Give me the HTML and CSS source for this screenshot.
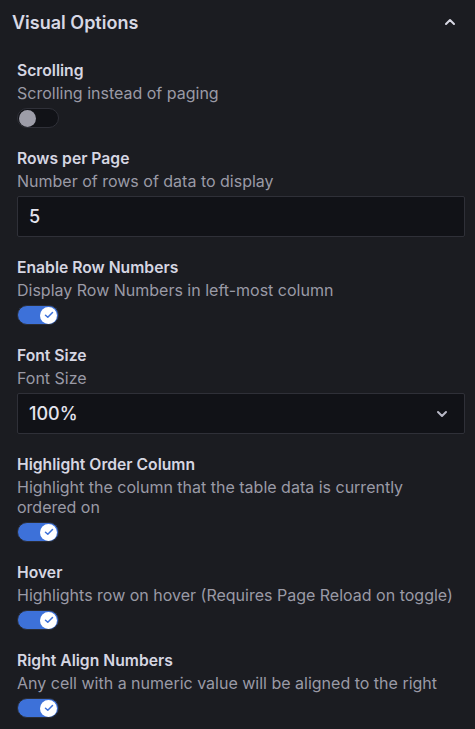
FILE: index.html
```html
<!DOCTYPE html>
<html lang="en">
<head>
<meta charset="utf-8">
<title>Visual Options</title>
<link rel="stylesheet" href="styles.css">
</head>
<body>
<section class="panel">
  <header class="panel-header">
    <h2 class="panel-title">Visual Options</h2>
    <svg class="chev" width="12" height="8" viewBox="0 0 12 8"><path d="M2 6 L6 2 L10 6" fill="none" stroke="#d8d8e4" stroke-width="2" stroke-linecap="round" stroke-linejoin="round"/></svg>
  </header>
  <div class="fields">
    <div class="field">
      <div class="label">Scrolling</div>
      <div class="desc">Scrolling instead of paging</div>
      <div class="switch off"><span class="knob"></span></div>
    </div>
    <div class="field">
      <div class="label">Rows per Page</div>
      <div class="desc">Number of rows of data to display</div>
      <div class="input">5</div>
    </div>
    <div class="field">
      <div class="label">Enable Row Numbers</div>
      <div class="desc">Display Row Numbers in left-most column</div>
      <div class="switch on"><span class="knob"><svg width="10" height="8" viewBox="0 0 10 8"><path d="M1.5 4.2 L3.8 6.3 L8.5 1.5" fill="none" stroke="#3d71d9" stroke-width="1.5" stroke-linecap="round" stroke-linejoin="round"/></svg></span></div>
    </div>
    <div class="field">
      <div class="label">Font Size</div>
      <div class="desc">Font Size</div>
      <div class="input select"><span>100%</span><svg width="12" height="8" viewBox="0 0 12 8"><path d="M2 2 L6 6 L10 2" fill="none" stroke="#b8b8c6" stroke-width="2" stroke-linecap="round" stroke-linejoin="round"/></svg></div>
    </div>
    <div class="field">
      <div class="label">Highlight Order Column</div>
      <div class="desc">Highlight the column that the table data is currently ordered on</div>
      <div class="switch on"><span class="knob"><svg width="10" height="8" viewBox="0 0 10 8"><path d="M1.5 4.2 L3.8 6.3 L8.5 1.5" fill="none" stroke="#3d71d9" stroke-width="1.5" stroke-linecap="round" stroke-linejoin="round"/></svg></span></div>
    </div>
    <div class="field">
      <div class="label">Hover</div>
      <div class="desc">Highlights row on hover (Requires Page Reload on toggle)</div>
      <div class="switch on"><span class="knob"><svg width="10" height="8" viewBox="0 0 10 8"><path d="M1.5 4.2 L3.8 6.3 L8.5 1.5" fill="none" stroke="#3d71d9" stroke-width="1.5" stroke-linecap="round" stroke-linejoin="round"/></svg></span></div>
    </div>
    <div class="field">
      <div class="label">Right Align Numbers</div>
      <div class="desc">Any cell with a numeric value will be aligned to the right</div>
      <div class="switch on"><span class="knob"><svg width="10" height="8" viewBox="0 0 10 8"><path d="M1.5 4.2 L3.8 6.3 L8.5 1.5" fill="none" stroke="#3d71d9" stroke-width="1.5" stroke-linecap="round" stroke-linejoin="round"/></svg></span></div>
    </div>
  </div>
</section>
</body>
</html>
```
FILE: styles.css
```css
html, body {
  margin: 0;
  padding: 0;
  background: #1b1c21;
}
body {
  font-family: Inter, "Noto Sans", sans-serif;
  color: #ccccdc;
  width: 475px;
  height: 729px;
  overflow: hidden;
}
.panel-header {
  height: 44px;
  display: flex;
  align-items: center;
  justify-content: space-between;
  padding: 0 19px 0 12px;
}
.panel-title {
  margin: 0;
  font-size: 18px;
  font-weight: 600;
  color: #d8d8e4;
}
.chev { display: block; }
.fields {
  padding: 17px 10px 0 17px;
  display: flex;
  flex-direction: column;
  gap: 21px;
}
.field {
  display: flex;
  flex-direction: column;
  align-items: flex-start;
}
.label {
  font-size: 15.7px;
  font-weight: 600;
  line-height: 20px;
  margin-bottom: 2px;
  color: #d6d6e2;
}
.desc {
  font-size: 16px;
  line-height: 20px;
  color: #9a9aa6;
}
.switch {
  margin-top: 5px;
  width: 40px;
  height: 18px;
  border-radius: 10px;
  border: 1px solid #2f3038;
  display: flex;
  align-items: center;
  box-sizing: content-box;
}
.switch.off {
  background: #111217;
}
.switch.on {
  background: #3d71d9;
  border-color: #2a2d36;
  justify-content: flex-end;
}
.knob {
  width: 17px;
  height: 17px;
  border-radius: 50%;
  margin: 0 1px;
  display: flex;
  align-items: center;
  justify-content: center;
}
.switch.off .knob { background: #9d9da8; }
.switch.on .knob { background: #ffffff; }
.input {
  margin-top: 5px;
  align-self: stretch;
  height: 39px;
  border: 1px solid #2f3038;
  border-radius: 2px;
  background: #111217;
  display: flex;
  align-items: center;
  padding: 0 12px 0 11px;
  font-size: 18px;
  color: #e4e4ee;
  font-weight: 500;
}
.select {
  justify-content: space-between;
  padding-right: 16px;
}
.select svg { display: block; }
```
